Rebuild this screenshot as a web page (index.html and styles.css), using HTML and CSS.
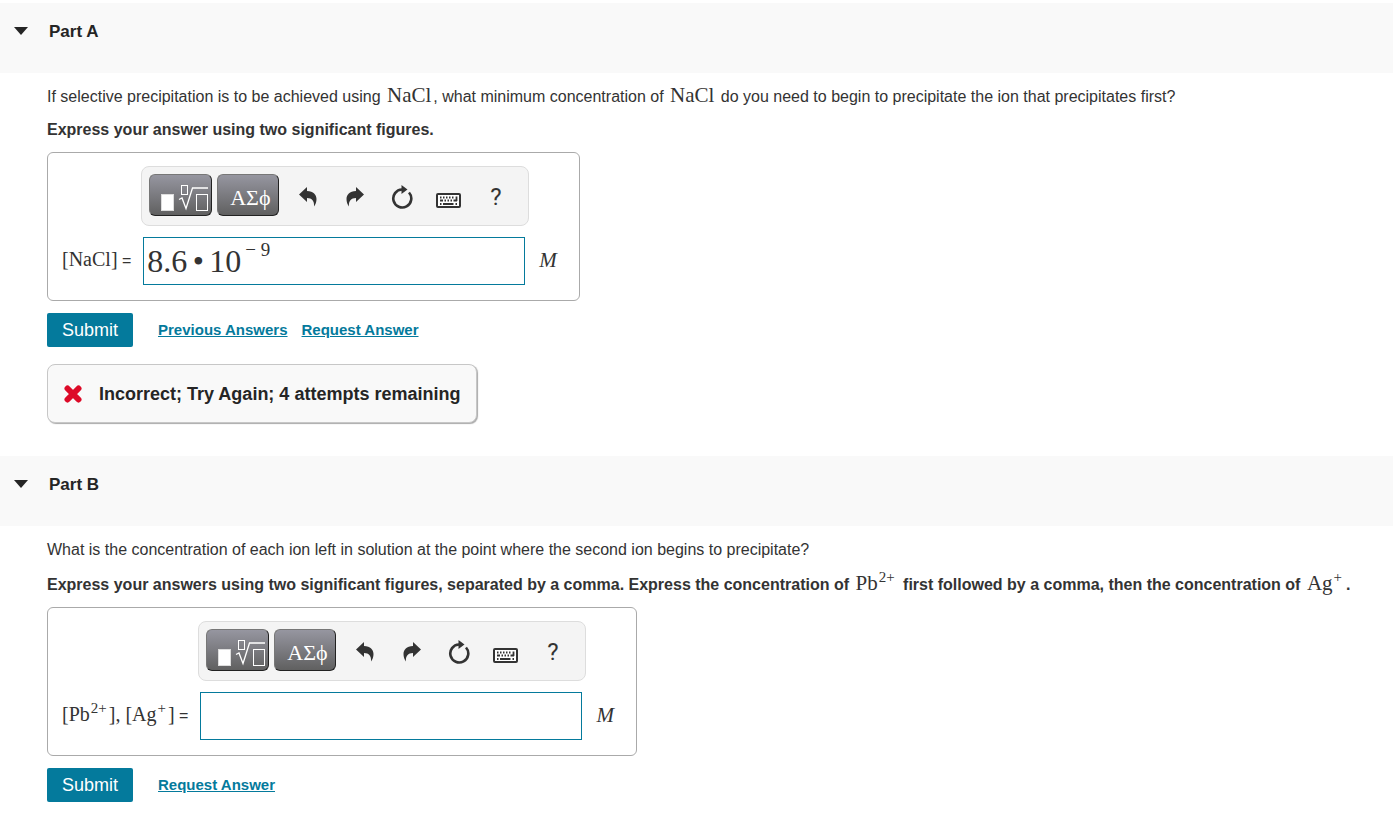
FILE: index.html
```
<!DOCTYPE html>
<html lang="en">
<head>
<meta charset="utf-8">
<title>Selective precipitation</title>
<link rel="stylesheet" href="styles.css">
</head>
<body>
<svg class="sprite" aria-hidden="true">
  <symbol id="templates" viewBox="0 0 61 40">
    <rect x="11.500" y="19.500" width="12" height="16" fill="#fff" stroke="#ddd"/>
    <rect x="31.500" y="10.500" width="6" height="9" fill="none" stroke="#fff"/>
    <path d="M29 24.500l3-1.500 4 10.500 6.500-20.500H58" fill="none" stroke="#fff" stroke-width="1.300"/>
    <rect x="46.500" y="19.500" width="11" height="16" fill="none" stroke="#fff"/>
  </symbol>
  <symbol id="undo" viewBox="0 0 18 20">
    <path d="M0 7.500L8 0v4c6.500 0 9.500 4 9.500 8 0 3-.8 5-2.500 7.500.5-5.500-2-8.500-7-8.500v4z" fill="#333"/>
  </symbol>
  <symbol id="reset" viewBox="0 0 22 24">
    <path d="M18 7.500A9 9 0 1 1 11 4.500" fill="none" stroke="#333" stroke-width="2.600"/>
    <path d="M10.500 0l6 4.500-6 4.500z" fill="#333"/>
  </symbol>
  <symbol id="keyboard" viewBox="0 0 25 15">
    <rect x="1" y="1" width="23" height="13" rx="1" fill="#fff" stroke="#333" stroke-width="2"/>
    <path d="M4 4.500h1.500m1.500 0h1.500m1.500 0h1.500m1.500 0h1.500m1.500 0h1.500M4 7.500h3m1.500 0h1.500m1.500 0h1.500m1.500 0h1.500m1.500 0h3.500M20.500 3.500v4.500M4 11h1.500m1.500 0h10.500m2 0h1.500" fill="none" stroke="#333" stroke-width="1.800"/>
  </symbol>
  <symbol id="cross" viewBox="0 0 18 18">
    <path d="M3.500 3.500l11 11M14.500 3.500l-11 11" fill="none" stroke="#dd0a28" stroke-width="6" stroke-linecap="round"/>
  </symbol>
</svg>
<main>
  <section class="part">
    <h2 class="part-header"><button class="toggle" type="button" aria-expanded="true"><span class="caret"></span>Part A</button></h2>
    <form class="part-body">
      <p class="question">If selective precipitation is to be achieved using <span class="math">NaCl</span>, what minimum concentration of <span class="math">NaCl</span> do you need to begin to precipitate the ion that precipitates first?</p>
      <p class="instruction">Express your answer using two significant figures.</p>
      <div class="answer">
        <label class="quantity" for="answer-a"><span class="math">[NaCl]</span> =</label>
        <div class="editor">
          <div class="toolbar">
            <button class="key" type="button" aria-label="Templates"><svg class="templates"><use href="#templates"/></svg></button>
            <button class="key greek" type="button">ΑΣϕ</button>
            <button class="tool" type="button" aria-label="Undo"><svg class="arrow"><use href="#undo"/></svg></button>
            <button class="tool" type="button" aria-label="Redo"><svg class="arrow redo"><use href="#undo"/></svg></button>
            <button class="tool" type="button" aria-label="Reset"><svg class="reset"><use href="#reset"/></svg></button>
            <button class="tool" type="button" aria-label="Keyboard shortcuts"><svg class="keyboard"><use href="#keyboard"/></svg></button>
            <button class="tool" type="button">?</button>
          </div>
          <div class="field">
            <input class="base filled" id="answer-a" type="text" value="8.6&#x2006;•&#x2006;10">
            <input class="exponent" type="text" value="− 9" aria-label="Exponent">
          </div>
        </div>
        <span class="unit">M</span>
      </div>
      <div class="actions">
        <button class="submit" type="submit">Submit</button>
        <a href="#previous">Previous Answers</a>
        <a href="#request-a">Request Answer</a>
      </div>
      <div class="feedback" role="status"><svg class="cross"><use href="#cross"/></svg>Incorrect; Try Again; 4 attempts remaining</div>
    </form>
  </section>
  <section class="part">
    <h2 class="part-header"><button class="toggle" type="button" aria-expanded="true"><span class="caret"></span>Part B</button></h2>
    <form class="part-body">
      <p class="question">What is the concentration of each ion left in solution at the point where the second ion begins to precipitate?</p>
      <p class="instruction with-formula">Express your answers using two significant figures, separated by a comma. Express the concentration of <span class="math">Pb<sup>2+</sup></span> first followed by a comma, then the concentration of <span class="math">Ag<sup>+</sup></span>.</p>
      <div class="answer">
        <label class="quantity" for="answer-b"><span class="math">[Pb<sup>2+</sup>], [Ag<sup>+</sup>]</span> =</label>
        <div class="editor">
          <div class="toolbar">
            <button class="key" type="button" aria-label="Templates"><svg class="templates"><use href="#templates"/></svg></button>
            <button class="key greek" type="button">ΑΣϕ</button>
            <button class="tool" type="button" aria-label="Undo"><svg class="arrow"><use href="#undo"/></svg></button>
            <button class="tool" type="button" aria-label="Redo"><svg class="arrow redo"><use href="#undo"/></svg></button>
            <button class="tool" type="button" aria-label="Reset"><svg class="reset"><use href="#reset"/></svg></button>
            <button class="tool" type="button" aria-label="Keyboard shortcuts"><svg class="keyboard"><use href="#keyboard"/></svg></button>
            <button class="tool" type="button">?</button>
          </div>
          <div class="field"><input class="base" id="answer-b" type="text"></div>
        </div>
        <span class="unit">M</span>
      </div>
      <div class="actions">
        <button class="submit" type="submit">Submit</button>
        <a href="#request-b">Request Answer</a>
      </div>
    </form>
  </section>
</main>
</body>
</html>
```
FILE: styles.css
```
* { box-sizing: border-box; }
body {
  margin: 0;
  padding-top: 3px;
  background: #fff;
  color: #333;
  font: 16px/20px "Liberation Sans", Arial, sans-serif;
}
button, input { margin: 0; padding: 0; border: 0; background: none; color: inherit; font: inherit; }
button { cursor: pointer; }
svg { display: block; }
.sprite { display: none; }

.part-header { margin: 0; padding: 19px 14px 31px; background: #f9f9f9; font-size: 17px; line-height: 20px; }
.toggle { display: flex; align-items: center; gap: 21px; height: 20px; color: #252525; font-weight: bold; }
.caret { margin-bottom: 2px; border: 7px solid transparent; border-top: 8px solid #252525; border-bottom: 0; }
.part-body { padding: 12px 20px 33px 47px; }
.question, .instruction { margin: 0; line-height: 24px; }
.instruction { margin: 9px 0 10px; font-weight: bold; }
.with-formula { margin-top: 11px; }
.math { margin: 0 2px; font-family: "Liberation Serif", "Times New Roman", serif; font-size: 21px; font-weight: normal; line-height: 20px; }
.math sup { padding: 0 2px 0 1px; font-size: 15px; line-height: 0; }

.answer { display: flex; align-items: flex-end; width: fit-content; padding: 13px 22px 15px 14px; border: 1px solid #aaa; border-radius: 6px; }
.quantity { height: 36px; margin-right: 10px; white-space: nowrap; }
.quantity .math { margin: 0; font-size: 20px; }
.unit { height: 37px; margin-left: 10px; font: italic 21px/24px "Liberation Serif", "Times New Roman", serif; }
.toolbar { display: flex; align-items: flex-start; width: 388px; height: 60px; padding: 7px; border: 1px solid #ddd; border-radius: 8px; background: #f4f4f4; }
.key { width: 63px; height: 42px; margin-right: 5px; border: 1px solid #222; border-top-color: #777; border-left-color: #777; border-radius: 6px; background: linear-gradient(#9696a0, #606060); color: #fff; }
.greek { width: 62px; padding: 6px 0 0 4px; font: 22px/24px "Liberation Serif", "Times New Roman", serif; }
.templates { width: 61px; height: 40px; }
.tool { display: grid; place-items: center; width: 47px; height: 46px; font: 24px/24px Roboto, sans-serif; }
.arrow { width: 18px; height: 20px; }
.redo { transform: scaleX(-1); }
.reset { width: 22px; height: 24px; }
.keyboard { width: 25px; height: 15px; margin-top: 6px; }
.field { display: flex; width: 382px; height: 48px; margin: 11px 0 0 2px; padding: 0 3px; border: 1px solid #047a9c; background: #fff; }
.base { width: 100%; outline: 0; font: 32px/46px "Liberation Serif", "Times New Roman", serif; }
.filled { flex: none; width: 98px; }
.exponent { flex: 1; min-width: 0; height: 24px; outline: 0; font: 19px/24px "Liberation Serif", "Times New Roman", serif; }

.actions { display: flex; align-items: center; gap: 14px; margin-top: 12px; }
.submit { height: 34px; margin-right: 11px; padding: 0 15px; border-radius: 2px; background: #047a9c; color: #fff; font-size: 18px; }
.actions a { color: #047a9c; font-size: 15px; font-weight: bold; }
.feedback { display: flex; align-items: center; gap: 17px; width: fit-content; height: 59px; margin-top: 17px; padding: 0 16px; border: 1px solid #c7c7c7; border-radius: 8px; background: #f9f9f9; box-shadow: 1px 1px 1px #aaa; color: #252525; font-size: 18px; font-weight: bold; }
.cross { width: 18px; height: 18px; }
```
